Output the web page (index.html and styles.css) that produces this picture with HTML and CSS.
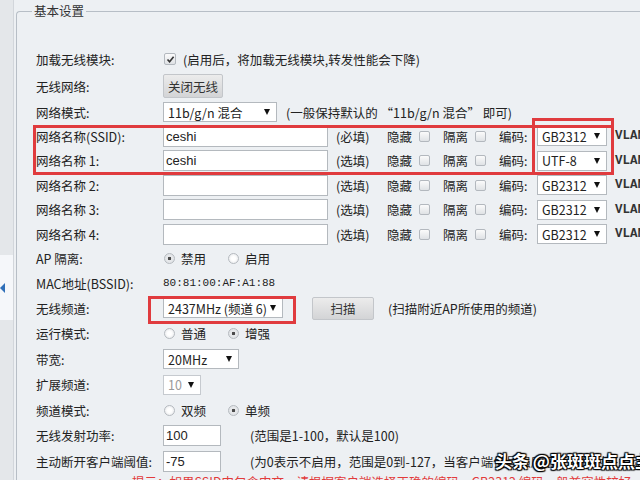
FILE: index.html
```html
<!DOCTYPE html>
<html lang="zh">
<head>
    <meta charset="UTF-8">
    <meta name="viewport" content="width=device-width, initial-scale=1.0">
    <title>无线基本设置</title>
    <link rel="stylesheet" href="styles.css">
</head>
<body>
    <div class="page">
        <div class="side">
            <div class="side-tab">
                <svg width="5" height="10" viewBox="0 0 5 10"><path d="M5 0 L0 5 L5 10 Z" fill="#2f6fb8"/></svg>
            </div>
        </div>
        <fieldset class="basic">
            <legend>基本设置</legend>
            <div class="form">
                <div class="row">
                    <span class="lbl">加载无线模块:</span>
                    <span class="cb on"><svg width="9" height="9" viewBox="0 0 9 9"><path d="M1.5 4.5 L3.6 6.8 L7.6 1.8" fill="none" stroke="#333" stroke-width="1.6"/></svg></span>
                    <span class="tip first">(启用后，将加载无线模块,转发性能会下降)</span>
                </div>
                <div class="row">
                    <span class="lbl">无线网络:</span>
                    <button class="btn">关闭无线</button>
                </div>
                <div class="row">
                    <span class="lbl">网络模式:</span>
                    <span class="sel mode">11b/g/n 混合<i class="arr"></i></span>
                    <span class="tip mode-tip">(一般保持默认的 “11b/g/n 混合” 即可)</span>
                </div>
                <div class="row">
                    <span class="lbl">网络名称(SSID):</span>
                    <input type="text" class="txt ssid" value="ceshi">
                    <span class="need">(必填)</span>
                    <span class="opt">隐藏</span><span class="cb"></span>
                    <span class="opt">隔离</span><span class="cb"></span>
                    <span class="code">编码:</span>
                    <span class="sel enc">GB2312<i class="arr"></i></span>
                    <span class="vlan">VLAN ID:</span>
                </div>
                <div class="row">
                    <span class="lbl">网络名称 1:</span>
                    <input type="text" class="txt ssid" value="ceshi">
                    <span class="need">(选填)</span>
                    <span class="opt">隐藏</span><span class="cb"></span>
                    <span class="opt">隔离</span><span class="cb"></span>
                    <span class="code">编码:</span>
                    <span class="sel enc">UTF-8<i class="arr"></i></span>
                    <span class="vlan">VLAN ID:</span>
                </div>
                <div class="row">
                    <span class="lbl">网络名称 2:</span>
                    <input type="text" class="txt ssid" value="">
                    <span class="need">(选填)</span>
                    <span class="opt">隐藏</span><span class="cb"></span>
                    <span class="opt">隔离</span><span class="cb"></span>
                    <span class="code">编码:</span>
                    <span class="sel enc">GB2312<i class="arr"></i></span>
                    <span class="vlan">VLAN ID:</span>
                </div>
                <div class="row">
                    <span class="lbl">网络名称 3:</span>
                    <input type="text" class="txt ssid" value="">
                    <span class="need">(选填)</span>
                    <span class="opt">隐藏</span><span class="cb"></span>
                    <span class="opt">隔离</span><span class="cb"></span>
                    <span class="code">编码:</span>
                    <span class="sel enc">GB2312<i class="arr"></i></span>
                    <span class="vlan">VLAN ID:</span>
                </div>
                <div class="row">
                    <span class="lbl">网络名称 4:</span>
                    <input type="text" class="txt ssid" value="">
                    <span class="need">(选填)</span>
                    <span class="opt">隐藏</span><span class="cb"></span>
                    <span class="opt">隔离</span><span class="cb"></span>
                    <span class="code">编码:</span>
                    <span class="sel enc">GB2312<i class="arr"></i></span>
                    <span class="vlan">VLAN ID:</span>
                </div>
                <div class="row">
                    <span class="lbl">AP 隔离:</span>
                    <span class="rd on"></span><span class="rd-txt">禁用</span>
                    <span class="rd second"></span><span class="rd-txt">启用</span>
                </div>
                <div class="row">
                    <span class="lbl">MAC地址(BSSID):</span>
                    <span class="mac">80:81:00:AF:A1:88</span>
                </div>
                <div class="row">
                    <span class="lbl">无线频道:</span>
                    <span class="sel chan">2437MHz (频道 6)<i class="arr"></i></span>
                    <button class="btn scan">扫描</button>
                    <span class="tip scan-tip">(扫描附近AP所使用的频道)</span>
                </div>
                <div class="row">
                    <span class="lbl">运行模式:</span>
                    <span class="rd"></span><span class="rd-txt">普通</span>
                    <span class="rd on second"></span><span class="rd-txt">增强</span>
                </div>
                <div class="row">
                    <span class="lbl">带宽:</span>
                    <span class="sel bw">20MHz<i class="arr"></i></span>
                </div>
                <div class="row">
                    <span class="lbl">扩展频道:</span>
                    <span class="sel ext off">10<i class="arr"></i></span>
                </div>
                <div class="row">
                    <span class="lbl">频道模式:</span>
                    <span class="rd"></span><span class="rd-txt">双频</span>
                    <span class="rd on second"></span><span class="rd-txt">单频</span>
                </div>
                <div class="row">
                    <span class="lbl">无线发射功率:</span>
                    <input type="text" class="txt short" value="100">
                    <span class="tip num-tip">(范围是1-100，默认是100)</span>
                </div>
                <div class="row">
                    <span class="lbl">主动断开客户端阈值:</span>
                    <input type="text" class="txt short" value="-75">
                    <span class="tip num-tip">(为0表示不启用，范围是0到-127，当客户端信号强度低于该值时将主动断开)</span>
                </div>
                <div class="row">
                    <span class="warn">提示：如果SSID中包含中文，请根据客户端选择正确的编码，GB2312 编码一般兼容性较好</span>
                </div>
            </div>
        </fieldset>
    </div>

    <!-- 截图上的红框标注 -->
    <div class="hl hl-ssid"></div>
    <div class="hl hl-code"></div>
    <div class="hl hl-chan"></div>

    <div class="mark">头条 @张斑斑点点主</div>
</body>
</html>
```

FILE: styles.css
```css
body {
    margin: 0;
    width: 640px;
    height: 480px;
    overflow: hidden;
    position: relative;
    background-color: #edf0f3;
    font-family: "Noto Sans CJK SC", sans-serif;
    font-size: 12.5px;
    color: #222;
}

.page {
    display: flex;
    height: 100%;
}

.side {
    width: 14px;
    flex-shrink: 0;
    box-sizing: border-box;
    padding-top: 255px;
    background-color: #e4e7ea;
    border-right: 1px solid #d2d6db;
}

.side-tab {
    height: 65px;
    display: flex;
    align-items: center;
    background-color: #f5f7fa;
}

.basic {
    width: 700px;
    flex-shrink: 0;
    margin: 3px 0 0 2px;
    padding: 0 0 0 19px;
    border: 1px solid #b7bec6;
    border-right: none;
    border-bottom: none;
    border-radius: 4px 0 0 0;
    min-width: 0;
}

.basic legend {
    line-height: 16px;
    padding: 0 2px;
    margin-left: -4px;
    color: #333;
}

.form {
    padding-top: 27px;
    display: grid;
    grid-template-rows: 26px 28px 24px repeat(7, 24.5px) repeat(7, 25.5px) 20px;
}

.row {
    display: flex;
    align-items: center;
    white-space: nowrap;
}

.lbl {
    width: 127px;
    flex-shrink: 0;
}

/* 复选框 */
.cb {
    width: 11px;
    height: 11px;
    box-sizing: border-box;
    border: 1px solid #b3b8be;
    border-radius: 2px;
    background: linear-gradient(#fbfbfb, #dfe2e5);
    display: flex;
    align-items: center;
    justify-content: center;
    flex-shrink: 0;
}

.cb.on {
    margin-left: 1px;
    width: 12px;
    height: 12px;
}

/* 单选框 */
.rd {
    width: 11px;
    height: 11px;
    box-sizing: border-box;
    margin-left: 1px;
    border: 1px solid #b5babf;
    border-radius: 50%;
    background: radial-gradient(circle, #ffffff 30%, #e2e4e7 100%);
    flex-shrink: 0;
}

.rd.on {
    background: radial-gradient(circle, #4a4a4a 0, #4a4a4a 22%, #e8eaec 32%, #dcdfe2 100%);
}

.rd.second {
    margin-left: 22px;
}

.rd-txt {
    margin-left: 6px;
    width: 25px;
}

.tip.first {
    margin-left: 7px;
}

.tip.mode-tip {
    margin-left: 9px;
}

.tip.scan-tip {
    margin-left: 14px;
}

.tip.num-tip {
    margin-left: 29px;
}

.btn {
    height: 24px;
    width: 60px;
    padding: 0;
    border: 1px solid #c3c6ca;
    border-radius: 2px;
    background: linear-gradient(#ececec, #d3d4d6);
    font-family: "Noto Sans CJK SC", sans-serif;
    font-size: 12.5px;
    color: #333;
}

.btn.scan {
    width: 62px;
    height: 23px;
    margin-left: 29px;
}

/* 下拉框 */
.sel {
    height: 20px;
    box-sizing: border-box;
    display: flex;
    align-items: center;
    justify-content: space-between;
    padding: 0 6px 0 4px;
    border: 1px solid #b4b9be;
    background-color: #ffffff;
    font-family: "Noto Sans CJK SC", sans-serif;
    font-size: 12.5px;
    color: #222;
    flex-shrink: 0;
}

.sel .arr {
    width: 0;
    height: 0;
    border-left: 3.5px solid transparent;
    border-right: 3.5px solid transparent;
    border-top: 6px solid #111;
}

.sel.mode {
    width: 114px;
}

.sel.enc {
    width: 70px;
    margin-left: 7px;
}

.sel.chan {
    width: 120px;
}

.sel.bw {
    width: 76px;
}

.sel.ext {
    width: 38px;
}

.sel.off {
    color: #9a9a9a;
    border-color: #c6cacf;
}

.txt {
    height: 21px;
    box-sizing: border-box;
    margin: 0;
    padding: 0 2px;
    border: 1px solid #b4b9be;
    background-color: #ffffff;
    font-family: "Liberation Sans", "Noto Sans CJK SC", sans-serif;
    font-size: 13px;
    color: #222;
    flex-shrink: 0;
}

.txt.ssid {
    width: 165px;
}

.txt.short {
    width: 58px;
}

.need {
    margin-left: 8px;
    width: 38px;
}

.opt {
    margin-left: 13px;
    width: 26px;
    margin-right: 6px;
}

.code {
    margin-left: 13px;
    width: 31px;
}

.vlan {
    margin-left: 8px;
    font-family: "Liberation Mono", monospace;
    font-weight: bold;
    color: #333;
}

.mac {
    font-family: "Liberation Mono", monospace;
    font-size: 11px;
    color: #222;
}

.warn {
    align-self: flex-start;
    margin-left: 96px;
    margin-top: 0;
    line-height: 16px;
    color: #e23b3b;
}

/* 标注红框 */
.hl {
    position: absolute;
    box-sizing: border-box;
    border: 3px solid #e03b3e;
}

.hl-ssid {
    left: 33px;
    top: 125px;
    width: 581px;
    height: 50px;
}

.hl-code {
    left: 532px;
    top: 118px;
    width: 82px;
    height: 57px;
}

.hl-chan {
    left: 148px;
    top: 296px;
    width: 148px;
    height: 28px;
}

.mark {
    position: absolute;
    left: 495px;
    top: 448px;
    font-size: 17px;
    font-weight: bold;
    color: #ffffff;
    white-space: nowrap;
    text-shadow: 0 0 2px #000, 1px 1px 1px #000, -1px -1px 1px #000, 1px -1px 1px #000, -1px 1px 1px #000;
}
```
